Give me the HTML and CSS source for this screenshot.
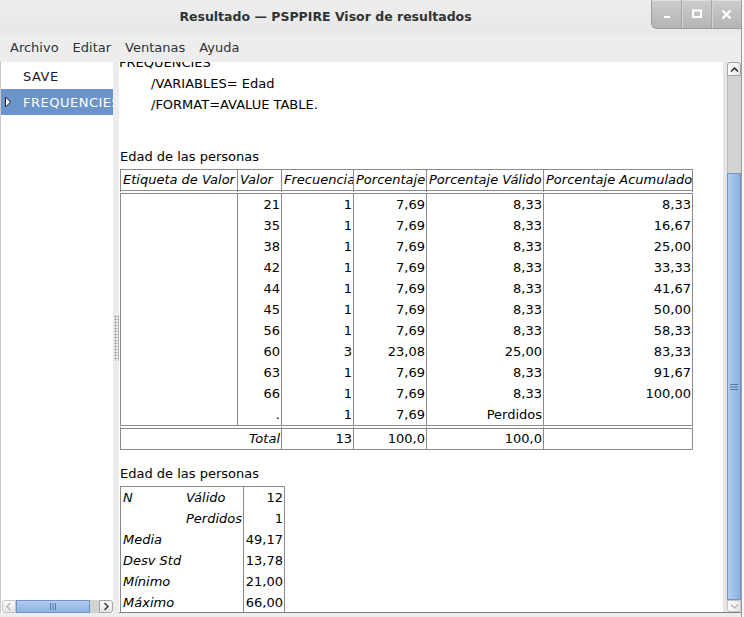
FILE: index.html
```html
<!DOCTYPE html>
<html lang="es">
<head>
<meta charset="utf-8">
<title>Resultado — PSPPIRE Visor de resultados</title>
<link rel="stylesheet" href="styles.css">
</head>
<body>
<div class="screen">
  <div class="window">
    <header class="titlebar">
      <div class="title">Resultado — PSPPIRE Visor de resultados</div>
      <div class="controls">
        <div class="ctl"><svg width="10" height="10" viewBox="0 0 10 10"><rect x="2" y="7" width="6" height="2" fill="#fff"/></svg></div>
        <div class="ctl sepl"><svg width="10" height="10" viewBox="0 0 10 10"><rect x="1" y="1.5" width="8" height="6.5" fill="none" stroke="#fff" stroke-width="2"/></svg></div>
        <div class="ctl sepl"><svg width="11" height="11" viewBox="0 0 11 11"><path d="M1.5 1.5 L9.5 9.5 M9.5 1.5 L1.5 9.5" stroke="#fff" stroke-width="2.2"/></svg></div>
      </div>
    </header>
    <nav class="menubar">
      <span class="menu">Archivo</span>
      <span class="menu">Editar</span>
      <span class="menu">Ventanas</span>
      <span class="menu">Ayuda</span>
    </nav>
    <div class="body">
      <aside class="left">
        <div class="tree">
          <div class="item"><span class="exp"></span><span class="label">SAVE</span></div>
          <div class="item sel"><span class="exp"><svg width="8" height="12" viewBox="0 0 8 12"><path d="M1.5 1 L6.5 6 L1.5 11 Z" fill="#fff" stroke="#222" stroke-width="1"/></svg></span><span class="label">FREQUENCIES</span></div>
        </div>
        <div class="hscroll">
          <div class="hbtn first"><svg width="8" height="9" viewBox="0 0 8 9"><path d="M5.5 1 L2 4.5 L5.5 8" fill="none" stroke="#b8b8b8" stroke-width="1.4"/></svg></div>
          <div class="htrough">
            <div class="hthumb"><svg width="8" height="7" viewBox="0 0 8 7"><path d="M1.5 0 V7 M4 0 V7 M6.5 0 V7" stroke="#5677a8" stroke-width="1"/></svg></div>
          </div>
          <div class="hbtn last"><svg width="8" height="9" viewBox="0 0 8 9"><path d="M2.5 1 L6 4.5 L2.5 8" fill="none" stroke="#333" stroke-width="1.4"/></svg></div>
        </div>
      </aside>
      <div class="sep"><div class="grip"></div></div>
      <main class="viewport">
        <div class="content">
          <div class="syntax">
            <div class="line">FREQUENCIES</div>
            <div class="line ind">/VARIABLES= Edad</div>
            <div class="line ind">/FORMAT=AVALUE TABLE.</div>
          </div>

          <div class="caption first-cap">Edad de las personas</div>
          <div class="freq">
            <div class="c h l">Etiqueta de Valor</div>
            <div class="c h">Valor</div>
            <div class="c h">Frecuencia</div>
            <div class="c h">Porcentaje</div>
            <div class="c h">Porcentaje Válido</div>
            <div class="c h">Porcentaje Acumulado</div>

            <div class="c l"></div><div class="c n">21</div><div class="c n">1</div><div class="c n">7,69</div><div class="c n">8,33</div><div class="c n">8,33</div>
            <div class="c l"></div><div class="c n">35</div><div class="c n">1</div><div class="c n">7,69</div><div class="c n">8,33</div><div class="c n">16,67</div>
            <div class="c l"></div><div class="c n">38</div><div class="c n">1</div><div class="c n">7,69</div><div class="c n">8,33</div><div class="c n">25,00</div>
            <div class="c l"></div><div class="c n">42</div><div class="c n">1</div><div class="c n">7,69</div><div class="c n">8,33</div><div class="c n">33,33</div>
            <div class="c l"></div><div class="c n">44</div><div class="c n">1</div><div class="c n">7,69</div><div class="c n">8,33</div><div class="c n">41,67</div>
            <div class="c l"></div><div class="c n">45</div><div class="c n">1</div><div class="c n">7,69</div><div class="c n">8,33</div><div class="c n">50,00</div>
            <div class="c l"></div><div class="c n">56</div><div class="c n">1</div><div class="c n">7,69</div><div class="c n">8,33</div><div class="c n">58,33</div>
            <div class="c l"></div><div class="c n">60</div><div class="c n">3</div><div class="c n">23,08</div><div class="c n">25,00</div><div class="c n">83,33</div>
            <div class="c l"></div><div class="c n">63</div><div class="c n">1</div><div class="c n">7,69</div><div class="c n">8,33</div><div class="c n">91,67</div>
            <div class="c l"></div><div class="c n">66</div><div class="c n">1</div><div class="c n">7,69</div><div class="c n">8,33</div><div class="c n">100,00</div>
            <div class="c l"></div><div class="c n">.</div><div class="c n">1</div><div class="c n">7,69</div><div class="c n">Perdidos</div><div class="c n"></div>

            <div class="c t l span2 it">Total</div><div class="c t n">13</div><div class="c t n">100,0</div><div class="c t n">100,0</div><div class="c t n"></div>
          </div>

          <div class="caption second-cap">Edad de las personas</div>
          <div class="stats">
            <div class="s a it">N</div><div class="s b it">Válido</div><div class="s v">12</div>
            <div class="s a it"></div><div class="s b it">Perdidos</div><div class="s v">1</div>
            <div class="s a it">Media</div><div class="s b"></div><div class="s v">49,17</div>
            <div class="s a it">Desv Std</div><div class="s b"></div><div class="s v">13,78</div>
            <div class="s a it">Mínimo</div><div class="s b"></div><div class="s v">21,00</div>
            <div class="s a it">Máximo</div><div class="s b"></div><div class="s v">66,00</div>
          </div>
        </div>
      </main>
      <div class="vscroll">
        <div class="vbtn up"><svg width="9" height="7" viewBox="0 0 9 7"><path d="M1 5.5 L4.5 2 L8 5.5" fill="none" stroke="#222" stroke-width="1.4"/></svg></div>
        <div class="vgap"></div>
        <div class="vthumb"><svg width="8" height="8" viewBox="0 0 8 8"><path d="M0 1.5 H8 M0 4 H8 M0 6.5 H8" stroke="#5677a8" stroke-width="1"/></svg></div>
        <div class="vbtn down"><svg width="9" height="7" viewBox="0 0 9 7"><path d="M1 1.5 L4.5 5 L8 1.5" fill="none" stroke="#b8b8b8" stroke-width="1.4"/></svg></div>
      </div>
    </div>
    <div class="footer"></div>
  </div>
  <div class="outside"></div>
</div>
</body>
</html>
```

FILE: styles.css
```css
* { box-sizing: border-box; }
html, body { margin: 0; padding: 0; }
body {
  width: 744px;
  height: 617px;
  overflow: hidden;
  background: #f4f4f4;
  font-family: "DejaVu Sans", "Noto Sans", sans-serif;
  font-size: 13px;
  color: #000;
}
.screen { display: flex; width: 744px; height: 617px; }
.window {
  width: 742px;
  height: 617px;
  display: flex;
  flex-direction: column;
  background: #ededed;
  border-right: 1px solid #9c9c9c;
}
.outside { flex: 1; background: #f6f6f6; }

/* title bar */
.titlebar {
  height: 33px;
  display: flex;
  background: linear-gradient(#eeeeee, #e8e8e8);
}
.title {
  flex: 1;
  display: flex;
  align-items: center;
  justify-content: center;
  font-weight: bold;
  font-size: 12.5px;
  color: #2e3436;
  padding-bottom: 1px;
}
.controls {
  display: flex;
  height: 29px;
  width: 90px;
  border: 1px solid #9e9e9e;
  border-top: none;
  border-right: none;
  border-radius: 0 0 0 6px;
  background: linear-gradient(#cdcdcd, #b4b4b4);
  box-shadow: inset 0 1px 0 rgba(255,255,255,0.35);
}
.ctl {
  flex: 1;
  display: flex;
  align-items: center;
  justify-content: center;
}
.ctl.sepl { border-left: 1px solid #a6a6a6; box-shadow: inset 1px 0 0 #d2d2d2; }

/* menu bar */
.menubar {
  height: 29px;
  display: flex;
  align-items: center;
  padding-left: 3px;
  color: #2e3436;
  padding-bottom: 1px;
}
.menu { padding: 0 7px; }

/* body */
.body { height: 551px; display: flex; }
.left {
  width: 113px;
  display: flex;
  flex-direction: column;
  background: #fff;
  border-left: 1px solid #c8c8c8;
}
.tree { flex: 1; padding-top: 1px; overflow: hidden; }
.item {
  height: 26px;
  display: flex;
  align-items: center;
  white-space: nowrap;
  color: #1a1a1a;
  padding-left: 3px;
  letter-spacing: 0.5px;
  overflow: hidden;
}
.item .exp { width: 19px; flex: none; display: flex; align-items: center; }
.item.sel { background: #6b94ca; color: #fff; }
.label { padding-top: 1px; }

.hscroll {
  height: 13px;
  display: flex;
  margin: 0 0 0 1px;
}
.hbtn {
  width: 14px;
  display: flex;
  align-items: center;
  justify-content: center;
  background: linear-gradient(#fbfbfb, #e4e4e4);
  border: 1px solid #a7a7a7;
}
.hbtn.first { border-radius: 3px 0 0 3px; border-color: #c4c4c4; }
.hbtn.last { border-radius: 0 3px 3px 0; }
.htrough {
  flex: 1;
  display: flex;
  background: #d2d2d2;
  padding-right: 9px;
}
.hthumb {
  flex: 1;
  display: flex;
  align-items: center;
  justify-content: center;
  background: linear-gradient(#b2cbee, #8db1e1);
  border: 1px solid #6f94c6;
}

.sep {
  width: 6px;
  display: flex;
  align-items: center;
  justify-content: center;
  background: #ececec;
}
.grip {
  width: 5px;
  height: 46px;
  background-image: radial-gradient(circle, #a8a8a8 0.9px, transparent 1.2px);
  background-size: 3px 3px;
}

.viewport {
  width: 604px;
  background: #fff;
  overflow: hidden;
  border-bottom: 1px solid #7d7d7d;
}
.content { margin-top: -10px; }
.syntax .line { line-height: 21px; white-space: nowrap; }
.syntax .ind { padding-left: 32px; }

.caption { line-height: 20px; margin-bottom: 2px; white-space: nowrap; padding-left: 1px; }
.first-cap { margin-top: 32px; }
.second-cap { margin-top: 14px; }

.freq {
  display: grid;
  grid-template-columns: 118px 44px 72px 73px 117px 149px;
  margin-left: 1px;
  width: 573px;
}
.c {
  border-right: 1px solid #8a8a8a;
  line-height: 21px;
  white-space: nowrap;
  overflow: hidden;
  padding: 0 1px 0 2px;
}
.c.l { border-left: 1px solid #8a8a8a; }
.c.h {
  font-style: italic;
  line-height: 20px;
  border-top: 1px solid #8a8a8a;
  border-bottom: 4px double #8a8a8a;
}
.c.n { text-align: right; }
.c.t {
  line-height: 20px;
  border-top: 4px double #8a8a8a;
  border-bottom: 1px solid #8a8a8a;
}
.span2 { grid-column: span 2; text-align: right; }
.it { font-style: italic; }

.stats {
  display: grid;
  grid-template-columns: 63px 61px 41px;
  margin-left: 1px;
  width: 165px;
  border-top: 1px solid #8a8a8a;
}
.s { line-height: 21px; white-space: nowrap; overflow: hidden; }
.s.a { border-left: 1px solid #8a8a8a; padding-left: 2px; }
.s.b { border-right: 1px solid #8a8a8a; padding-left: 3px; }
.s.v { border-right: 1px solid #8a8a8a; text-align: right; padding-right: 1px; }

/* vertical scrollbar */
.vscroll {
  width: 18px;
  display: flex;
  flex-direction: column;
  padding-left: 4px;
  background: #e6e6e6;
  border-bottom: 1px solid #7d7d7d;
}
.vbtn {
  display: flex;
  align-items: center;
  justify-content: center;
  background: linear-gradient(to right, #fdfdfd, #e8e8e8);
  border: 1px solid #a4a4a4;
}
.vbtn.up { height: 14px; border-radius: 3px 3px 0 0; }
.vbtn.down { height: 12px; border-radius: 0 0 3px 3px; border-color: #c4c4c4; }
.vgap { height: 97px; background: #d3d3d3; border-left: 1px solid #bdbdbd; }
.vthumb {
  flex: 1;
  display: flex;
  align-items: center;
  justify-content: center;
  background: linear-gradient(to right, #b3ccee, #8cb0e0);
  border: 1px solid #6f94c6;
}
.footer { flex: 1; background: #ededed; }
```
